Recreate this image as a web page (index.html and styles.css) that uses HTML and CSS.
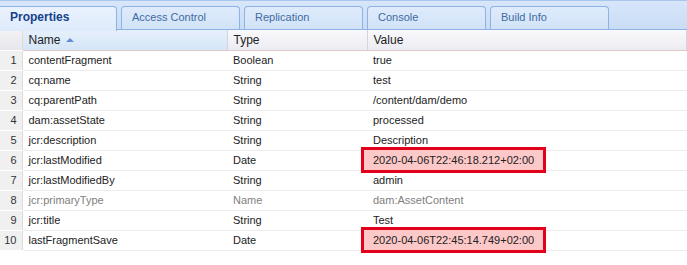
FILE: index.html
```html
<html>
<head>
<title>Properties</title>
<link rel="stylesheet" href="styles.css">
<meta http-equiv="Content-Type" content="text/html; charset=UTF-8">
</head>
<body>
<div class="tab-strip">
  <div class="tab tab-active">Properties</div>
  <div class="tab">Access Control</div>
  <div class="tab">Replication</div>
  <div class="tab">Console</div>
  <div class="tab">Build Info</div>
</div>
<table class="grid" cellpadding="0" cellspacing="0">
  <colgroup>
    <col class="col-num"><col class="col-name"><col class="col-type"><col>
  </colgroup>
  <tr class="head">
    <td class="num-cell"></td>
    <td class="sorted">Name <span class="sort-arrow"></span></td>
    <td>Type</td>
    <td>Value</td>
  </tr>
  <tr><td class="num-cell">1</td><td>contentFragment</td><td>Boolean</td><td>true</td></tr>
  <tr><td class="num-cell">2</td><td>cq:name</td><td>String</td><td>test</td></tr>
  <tr><td class="num-cell">3</td><td>cq:parentPath</td><td>String</td><td>/content/dam/demo</td></tr>
  <tr><td class="num-cell">4</td><td>dam:assetState</td><td>String</td><td>processed</td></tr>
  <tr><td class="num-cell">5</td><td>jcr:description</td><td>String</td><td>Description</td></tr>
  <tr><td class="num-cell">6</td><td>jcr:lastModified</td><td>Date</td><td><span class="mark">2020-04-06T22:46:18.212+02:00</span></td></tr>
  <tr><td class="num-cell">7</td><td>jcr:lastModifiedBy</td><td>String</td><td>admin</td></tr>
  <tr class="protected"><td class="num-cell">8</td><td>jcr:primaryType</td><td>Name</td><td>dam:AssetContent</td></tr>
  <tr><td class="num-cell">9</td><td>jcr:title</td><td>String</td><td>Test</td></tr>
  <tr><td class="num-cell">10</td><td>lastFragmentSave</td><td>Date</td><td><span class="mark">2020-04-06T22:45:14.749+02:00</span></td></tr>
</table>
</body>
</html>
```
FILE: styles.css
```css
body {
 margin: 0;
 background: #ffffff;
 font-family: "Liberation Sans", Arial, sans-serif;
 font-size: 11px;
 color: #222222;
}
.tab-strip {
 display: flex;
 gap: 4px;
 height: 23px;
 padding-top: 5px;
 background: linear-gradient(#d7e6f9, #c9ddf6);
 border-top: 1px solid #a9c6ec;
 border-bottom: 1px solid #8db2e3;
 box-sizing: content-box;
}
.tab {
 width: 99px;
 padding-left: 10px;
 padding-right: 8px;
 line-height: 21px;
 border: 1px solid #8db2e3;
 border-bottom: none;
 border-radius: 4px 4px 0 0;
 background: linear-gradient(#deebfb, #d1e3f8);
 color: #416aa3;
 font-size: 11px;
}
.tab-active {
 width: 98px;
 background: linear-gradient(#eaf2fd, #deebfb);
 color: #15428b;
 font-weight: bold;
 font-size: 12px;
 border-left: none;
 border-radius: 0 4px 0 0;
 height: 24px;
 margin-bottom: -1px;
}
.grid {
 width: 100%;
 border-collapse: collapse;
 table-layout: fixed;
}
.col-num {
 width: 22px;
}
.col-name {
 width: 205px;
}
.col-type {
 width: 140px;
}
.grid td {
 height: 20px;
 padding: 0 6px;
 border-bottom: 1px solid #ececec;
 white-space: nowrap;
 font-size: 11px;
}
.grid .head td {
 height: 20px;
 background: linear-gradient(#f9f9fb, #ebebf2);
 border-right: 1px solid #d4d4dc;
 border-bottom: 1px solid #e0c8c8;
 color: #222222;
 font-size: 12px;
}
.grid .head td.sorted {
 background: linear-gradient(#e6f0fb, #d5e6f7);
}
.sort-arrow {
 display: inline-block;
 width: 0;
 height: 0;
 margin-left: 2px;
 border-left: 4px solid transparent;
 border-right: 4px solid transparent;
 border-bottom: 4px solid #5f8fcf;
 vertical-align: 2px;
}
.grid td.num-cell {
 padding: 0 5px 0 0;
 text-align: right;
 background: #f0f0f0;
 border-right: 1px solid #dcdcdc;
 border-bottom: 1px solid #ffffff;
 color: #333333;
}
.grid .head td.num-cell {
 background: linear-gradient(#f3f3f6, #e6e6ec);
}
.protected td {
 color: #808080;
}
.mark {
 margin-left: -12px;
 padding: 4px 9px;
 border: 3px solid #e3001b;
 background: #fdc8c8;
}
```
